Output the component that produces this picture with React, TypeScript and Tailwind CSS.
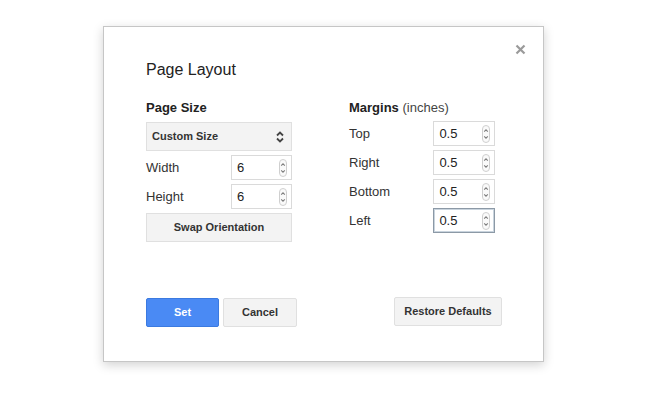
import React from "react";

const font = { fontFamily: '"Liberation Sans", Arial, sans-serif' };

function Spinner() {
  return (
    <svg width="8" height="18" viewBox="0 0 8 18" className="shrink-0">
      <rect x="0.5" y="0.5" width="7" height="17" rx="3.5" fill="#fafafa" stroke="#cfcfcf" />
      <path d="M2.2 6.6 L4 4.8 L5.8 6.6" fill="none" stroke="#7e7e7e" strokeWidth="1.1" />
      <path d="M2.2 11.4 L4 13.2 L5.8 11.4" fill="none" stroke="#7e7e7e" strokeWidth="1.1" />
    </svg>
  );
}

function NumInput({ value, width, focused }: { value: string; width: string; focused?: boolean }) {
  return (
    <div
      className={`${width} h-[25px] flex items-center justify-between pl-[5px] pr-[4px] bg-white border ${
        focused ? "border-[#8c99a6] shadow-[inset_0_0_0_1px_#c9d4de]" : "border-[#dadada]"
      }`}
    >
      <span className="text-[13px] text-[#222]">{value}</span>
      <Spinner />
    </div>
  );
}

function Row({ label, value, width, focused }: { label: string; value: string; width: string; focused?: boolean }) {
  return (
    <div className="flex items-center h-[25px]">
      <span className="w-[85px] text-[13px] text-[#333]">{label}</span>
      <NumInput value={value} width={width} focused={focused} />
    </div>
  );
}

export default function App() {
  return (
    <div className="w-[647px] h-[404px] bg-white flex justify-center pt-[26px]" style={font}>
      <div className="relative w-[441px] h-[336px] bg-white border border-[#c6c6c6] shadow-[0_3px_10px_rgba(0,0,0,0.18)] pl-[42px] pr-[41px] pt-[33px] flex flex-col">
        <svg className="absolute right-[17px] top-[17px]" width="11" height="11" viewBox="0 0 11 11">
          <path d="M1.5 1.5 L9.5 9.5 M9.5 1.5 L1.5 9.5" stroke="#9a9a9a" strokeWidth="2.2" />
        </svg>
        <div className="h-[20px] text-[16px] leading-[20px] text-[#222]">Page Layout</div>
        <div className="flex mt-[20px] gap-[57px] items-start">
          <div className="w-[146px] flex flex-col">
            <div className="h-[16px] leading-[16px] text-[13px] font-bold text-[#222]">Page Size</div>
            <div className="mt-[6px] h-[29px] bg-[#f3f3f3] border border-[#e0e0e0] flex items-center justify-between pl-[5px] pr-[7px]">
              <span className="text-[11px] font-bold text-[#333]">Custom Size</span>
              <svg width="8" height="12" viewBox="0 0 8 12">
                <path d="M1 4.5 L4 1.5 L7 4.5" fill="none" stroke="#444" strokeWidth="1.8" />
                <path d="M1 7.5 L4 10.5 L7 7.5" fill="none" stroke="#444" strokeWidth="1.8" />
              </svg>
            </div>
            <div className="mt-[4px] flex flex-col gap-[4px]">
              <Row label="Width" value="6" width="w-[61px]" />
              <Row label="Height" value="6" width="w-[61px]" />
            </div>
            <div className="mt-[4px] h-[29px] bg-[#f3f3f3] border border-[#e0e0e0] flex items-center justify-center">
              <span className="text-[11px] font-bold text-[#333]">Swap Orientation</span>
            </div>
          </div>
          <div className="w-[146px] flex flex-col">
            <div className="h-[16px] leading-[16px] text-[13px] text-[#222]">
              <span className="font-bold">Margins</span> <span className="text-[#444]">(inches)</span>
            </div>
            <div className="mt-[5px] flex flex-col gap-[4px]">
              <Row label="Top" value="0.5" width="w-[62px]" />
              <Row label="Right" value="0.5" width="w-[62px]" />
              <Row label="Bottom" value="0.5" width="w-[62px]" />
              <Row label="Left" value="0.5" width="w-[62px]" focused />
            </div>
          </div>
        </div>
        <div className="mt-[56px] flex items-center">
          <div className="w-[73px] h-[29px] rounded-[2px] bg-[#4a8af4] border border-[#3b7ae0] flex items-center justify-center">
            <span className="text-[11px] font-bold text-white">Set</span>
          </div>
          <div className="ml-[4px] w-[74px] h-[29px] rounded-[2px] bg-[#f3f3f3] border border-[#e0e0e0] flex items-center justify-center">
            <span className="text-[11px] font-bold text-[#333]">Cancel</span>
          </div>
          <div className="ml-auto w-[108px] h-[29px] -mt-[3px] rounded-[2px] bg-[#f3f3f3] border border-[#e0e0e0] flex items-center justify-center">
            <span className="text-[11px] font-bold text-[#333]">Restore Defaults</span>
          </div>
        </div>
      </div>
    </div>
  );
}
